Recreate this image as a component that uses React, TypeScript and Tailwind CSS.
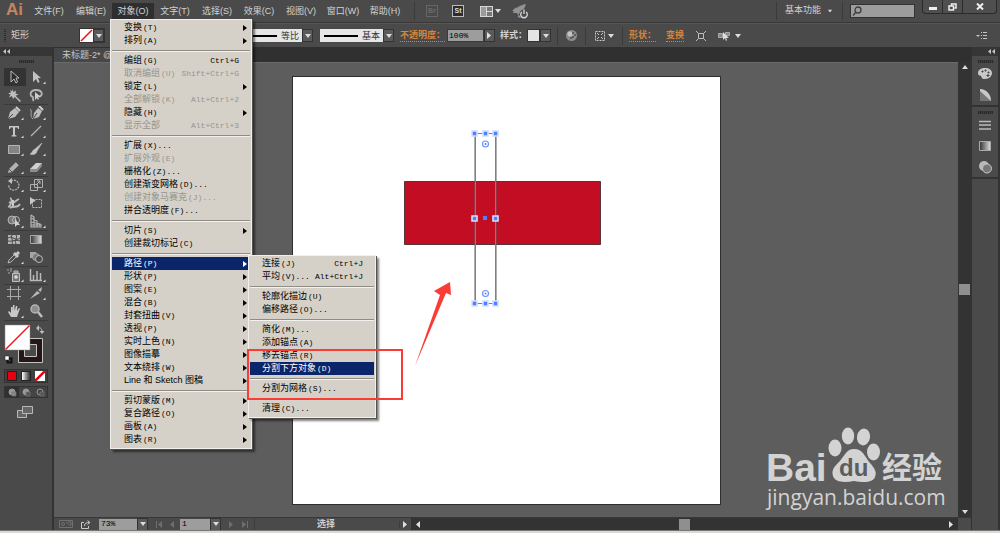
import { clsx } from 'clsx'
import type { ReactNode } from 'react'

type Item = {
  label: string
  keys?: string
  shortcut?: string
  disabled?: boolean
  sub?: boolean
  active?: boolean
}

const menuNames = ['文件(F)', '编辑(E)', '对象(O)', '文字(T)', '选择(S)', '效果(C)', '视图(V)', '窗口(W)', '帮助(H)']

const objectMenu: Item[][] = [
  [
    { label: '变换', keys: '(T)', sub: true },
    { label: '排列', keys: '(A)', sub: true },
  ],
  [
    { label: '编组', keys: '(G)', shortcut: 'Ctrl+G' },
    { label: '取消编组', keys: '(U)', shortcut: 'Shift+Ctrl+G', disabled: true },
    { label: '锁定', keys: '(L)', sub: true },
    { label: '全部解锁', keys: '(K)', shortcut: 'Alt+Ctrl+2', disabled: true },
    { label: '隐藏', keys: '(H)', sub: true },
    { label: '显示全部', shortcut: 'Alt+Ctrl+3', disabled: true },
  ],
  [
    { label: '扩展', keys: '(X)...' },
    { label: '扩展外观', keys: '(E)', disabled: true },
    { label: '栅格化', keys: '(Z)...' },
    { label: '创建渐变网格', keys: '(D)...' },
    { label: '创建对象马赛克', keys: '(J)...', disabled: true },
    { label: '拼合透明度', keys: '(F)...' },
  ],
  [
    { label: '切片', keys: '(S)', sub: true },
    { label: '创建裁切标记', keys: '(C)' },
  ],
  [
    { label: '路径', keys: '(P)', sub: true, active: true },
    { label: '形状', keys: '(P)', sub: true },
    { label: '图案', keys: '(E)', sub: true },
    { label: '混合', keys: '(B)', sub: true },
    { label: '封套扭曲', keys: '(V)', sub: true },
    { label: '透视', keys: '(P)', sub: true },
    { label: '实时上色', keys: '(N)', sub: true },
    { label: '图像描摹', sub: true },
    { label: '文本绕排', keys: '(W)', sub: true },
    { label: 'Line 和 Sketch 图稿', sub: true },
  ],
  [
    { label: '剪切蒙版', keys: '(M)', sub: true },
    { label: '复合路径', keys: '(O)', sub: true },
    { label: '画板', keys: '(A)', sub: true },
    { label: '图表', keys: '(R)', sub: true },
  ],
]

const pathMenu: Item[][] = [
  [
    { label: '连接', keys: '(J)', shortcut: 'Ctrl+J' },
    { label: '平均', keys: '(V)...', shortcut: 'Alt+Ctrl+J' },
  ],
  [
    { label: '轮廓化描边', keys: '(U)' },
    { label: '偏移路径', keys: '(O)...' },
  ],
  [
    { label: '简化', keys: '(M)...' },
    { label: '添加锚点', keys: '(A)' },
    { label: '移去锚点', keys: '(R)' },
    { label: '分割下方对象', keys: '(D)', active: true },
  ],
  [{ label: '分割为网格', keys: '(S)...' }],
  [{ label: '清理', keys: '(C)...' }],
]

function Menu({ groups, className, children }: { groups: Item[][]; className: string; children?: ReactNode }) {
  return (
    <div
      role="menu"
      className={clsx(
        'absolute border border-[#f1efe9] bg-[#d5d1c8] pt-px pb-[2px] text-[9px] leading-[13px] text-black shadow-[1px_1px_0_#55534f,3px_3px_2px_rgba(0,0,0,0.5)]',
        className,
      )}
    >
      {groups.map((group, g) => (
        <div key={g}>
          {g > 0 && (
            <div className="flex h-[7px] items-center px-px">
              <hr className="h-[2px] w-full border-0 border-t border-b border-t-[#8f8c86] border-b-[#f4f2ee]" />
            </div>
          )}
          {group.map((item) => (
            <div key={item.label} className="relative px-px">
              <button
                role="menuitem"
                disabled={item.disabled}
                className={clsx(
                  'flex h-[13px] w-full items-center pr-[3px] pl-3 whitespace-nowrap',
                  item.active && 'bg-[#0b256b] text-white',
                  item.disabled && 'text-[#97948e]',
                )}
              >
                <span>{item.label}</span>
                <span className="pl-px font-['Liberation_Mono',monospace] text-[8px]">{item.keys}</span>
                <span className="ml-auto pr-2 font-['Liberation_Mono',monospace] text-[8px]">{item.shortcut}</span>
                {item.sub && (
                  <svg width="4" height="6" viewBox="0 0 4 6" fill="currentColor">
                    <path d="M0 0l4 3-4 3z" />
                  </svg>
                )}
              </button>
              {item.active && children}
            </div>
          ))}
        </div>
      ))}
    </div>
  )
}

function Down({ className }: { className?: string }) {
  return (
    <svg width="6" height="4" viewBox="0 0 6 4" fill="#dcdcdc" className={className}>
      <path d="M0 0h6L3 4z" />
    </svg>
  )
}

function Arrow({ left, bar, dim }: { left?: boolean; bar?: boolean; dim?: boolean }) {
  return (
    <svg width="7" height="7" viewBox="0 0 7 7" fill={dim ? '#6e6e6e' : '#e2e2e2'} className={clsx(left && 'rotate-180')}>
      <path d="M1 0l4 3.5L1 7z" />
      {bar && <path d="M6 0h1v7H6z" />}
    </svg>
  )
}

function DropButton({ label, children }: { label: string; children?: ReactNode }) {
  return (
    <button aria-label={label} className="flex h-[13px] w-[11px] items-center justify-center border border-[#333] bg-[#5a5a5a]">
      {children ?? <Down />}
    </button>
  )
}

function Sep() {
  return <span className="h-[18px] w-px bg-[#3a3a3a]" />
}

function StrokeSelect({ label, value, line }: { label: string; value: string; line: string }) {
  return (
    <div className="flex h-[13px] items-center bg-[#e6e6e6] text-[#333]">
      <span className={clsx('mx-1 h-[2px] bg-black', line)} />
      <select aria-label={label} className="w-[21px] appearance-none bg-transparent text-[9px] leading-3">
        <option>{value}</option>
      </select>
      <DropButton label={`${label}选项`} />
    </div>
  )
}

function MenuBar() {
  return (
    <header className="relative z-20 flex h-[23px] items-start border-b border-[#383838] bg-[#4a4a4a] text-[#d2d2d2]">
      <span className="w-7 pl-[6px] font-['Liberation_Sans',sans-serif] text-[17px] leading-5 font-bold text-[#c48562]">Ai</span>
      <nav className="flex pt-[3px]">
        {menuNames.map((name) => (
          <div key={name} className="relative">
            <button className={clsx('block h-4 w-[42px] text-center text-[9px] leading-4 whitespace-nowrap', name === '对象(O)' && 'bg-[#2f2f2f]')}>
              {name}
            </button>
            {name === '对象(O)' && (
              <Menu groups={objectMenu} className="top-4 -left-[2px] w-[142px]">
                <Menu groups={pathMenu} className="-top-[2px] left-[137px] z-10 w-[128px]" />
                <div className="pointer-events-none absolute top-[92px] left-[136px] z-20 h-[51px] w-[156px] border-2 border-[#fb3c36]" />
              </Menu>
            )}
          </div>
        ))}
      </nav>
      <div className="flex h-[22px] items-center pl-2">
        <Sep />
        <button className="ml-[11px] h-3 w-3 border border-[#666] text-[7px] leading-[10px] font-bold text-[#6b6b6b]">Br</button>
        <button className="ml-[14px] h-3 w-3 border border-[#bbb] bg-[#2c2c2c] text-[7px] leading-[10px] font-bold text-[#ddd]">St</button>
        <button aria-label="排列文档" className="ml-4 flex items-center gap-[2px]">
          <svg width="13" height="11" viewBox="0 0 13 11">
            <path d="M0 0h13v11H0z" fill="#d6d6d6" />
            <path d="M1 1h5v9H1z" fill="#9b9b9b" />
            <path d="M7 1h5v4H7zM7 6h5v4H7z" fill="#777" />
          </svg>
          <Down />
        </button>
        <button aria-label="GPU 性能" className="ml-[11px]">
          <svg width="17" height="15" viewBox="0 0 17 15">
            <path d="M1 9C3 4 8 1 14 0c-1 4-4 8-8 11l-1-2z" fill="#929292" />
            <path d="M1 7l4-3M6 12l3 1" stroke="#929292" strokeWidth="2" />
            <circle cx="12" cy="10" r="4.5" fill="#4a4a4a" />
            <path d="M9.8 8a3.3 3.3 0 104.4 0M12 5.500v4.500" fill="none" stroke="#d8d8d8" strokeWidth="1.3" />
          </svg>
        </button>
      </div>
      <div className="ml-auto flex h-[22px] items-center">
        <Sep />
        <select aria-label="工作区" className="ml-2 w-[38px] appearance-none text-[9px]">
          <option>基本功能</option>
        </select>
        <Down className="mr-[9px] ml-1 scale-75" />
        <Sep />
        <label className="mx-[7px] flex h-[14px] w-[65px] items-center border border-[#333] bg-[#9d9d9d] pl-px">
          <svg width="10" height="10" viewBox="0 0 10 10" fill="none" stroke="#3c3c3c" strokeWidth="1.300">
            <circle cx="6" cy="4" r="3" />
            <path d="M4 6L1 9.500" />
          </svg>
          <input aria-label="搜索" className="w-0 flex-1 text-[9px] outline-none" />
        </label>
      </div>
      <div className="mr-[3px] flex h-[14px] w-[75px] divide-x divide-[#2b2b2b] rounded-b-sm border border-t-0 border-[#2b2b2b] bg-[#4f4f4f]">
        <button aria-label="最小化" className="flex w-5 items-center justify-center">
          <svg width="8" height="8"><path d="M0 4h8v3H0z" fill="#eee" /></svg>
        </button>
        <button aria-label="还原" className="flex w-5 items-center justify-center">
          <svg width="9" height="8" viewBox="0 0 9 8" fill="none" stroke="#eee" strokeWidth="1.500">
            <path d="M3.500 2.500V1H8v4H6.500M1 3h4.500v4H1z" />
          </svg>
        </button>
        <button aria-label="关闭" className="flex flex-1 items-center justify-center">
          <svg width="8" height="7" viewBox="0 0 8 7" stroke="#eee" strokeWidth="2"><path d="M1 0.500l6 6M7 0.500l-6 6" /></svg>
        </button>
      </div>
    </header>
  )
}

function ControlBar() {
  const link = 'border-b border-dotted border-[#d08136] text-[9px] leading-[11px] font-bold text-[#d8843a] whitespace-nowrap'
  return (
    <div className="flex h-6 items-center border-t border-[#575757] bg-[#4a4a4a] text-[9px] text-[#d2d2d2]">
      <span className="ml-1 h-[14px] w-[2px] bg-[repeating-linear-gradient(#2c2c2c_0_1px,transparent_1px_2px)]" />
      <span className="ml-[5px]">矩形</span>
      <div className="ml-[50px] flex items-center border border-[#333]">
        <button aria-label="填色">
          <svg width="13" height="13" viewBox="0 0 13 13"><path d="M0 0h13v13H0z" fill="#fff" /><path d="M1 12L12 1" stroke="#e21b1b" strokeWidth="1.600" /></svg>
        </button>
        <DropButton label="填色选项" />
      </div>
      <div className="ml-[130px]">
        <StrokeSelect label="变量宽度" value="等比" line="w-[38px]" />
      </div>
      <div className="ml-[7px]">
        <StrokeSelect label="画笔定义" value="基本" line="w-[34px]" />
      </div>
      <a href="#opacity" className={clsx('ml-[6px]', link)}>不透明度：</a>
      <input aria-label="不透明度" defaultValue="100%" className="ml-[2px] h-[13px] w-[37px] border border-[#3a3a3a] bg-[#9d9d9d] pl-px font-['Liberation_Mono',monospace] text-[8px] text-black outline-none" />
      <DropButton label="不透明度选项"><Arrow /></DropButton>
      <span className="ml-[5px] font-bold whitespace-nowrap">样式：</span>
      <div className="flex items-center">
        <button aria-label="图形样式" className="h-[13px] w-[13px] border border-[#333] bg-[#e3e3e3]" />
        <DropButton label="图形样式选项" />
      </div>
      <div className="ml-[6px] flex items-center">
        <Sep />
        <button aria-label="重新着色图稿" className="mx-2">
          <svg width="11" height="11" viewBox="0 0 11 11">
            <circle cx="5.500" cy="5.500" r="5.500" fill="#8d8d8d" />
            <circle cx="4" cy="4" r="2.500" fill="#c4c4c4" />
            <path d="M6 2h2v2H6zM8 4h2v2H8zM6 6h2v2H6zM4 7h2v2H4z" fill="#5c5c5c" />
          </svg>
        </button>
        <Sep />
        <button aria-label="对齐" className="mr-2 ml-[9px] flex items-center gap-[3px]">
          <svg width="10" height="10" viewBox="0 0 10 10" fill="none" stroke="#c6c6c6">
            <path d="M.5.5h9v9h-9z" strokeDasharray="2 1" />
            <path d="M2 2l2 2M8 2L6 4M2 8l2-2M8 8L6 6" />
          </svg>
          <Down />
        </button>
        <Sep />
      </div>
      <a href="#shape" className={clsx('ml-[6px]', link)}>形状：</a>
      <div className="ml-[5px]"><Sep /></div>
      <a href="#transform" className={clsx('ml-[5px]', link)}>变换</a>
      <div className="ml-[3px]"><Sep /></div>
      <button aria-label="隔离" className="ml-[9px]">
        <svg width="10" height="10" viewBox="0 0 10 10" fill="none" stroke="#bdbdbd">
          <path d="M2.500 2.500h5v5h-5z" />
          <path d="M0 0l2.500 2.500M10 0L7.500 2.500M0 10l2.500-2.500M10 10L7.500 7.500" />
        </svg>
      </button>
      <button aria-label="选择类似对象" className="ml-3 flex items-center gap-[5px]">
        <svg width="12" height="10" viewBox="0 0 12 10">
          <path d="M.5 2.500h4v4h-4zM7.500 1.500h4v3h-4z" fill="#888" stroke="#aaa" />
          <path d="M5 1v8l2-2 1 3 1-1-1-2h3z" fill="#ddd" />
        </svg>
        <Down />
      </button>
      <button aria-label="面板菜单" className="mr-[13px] ml-auto">
        <svg width="11" height="8" viewBox="0 0 11 8" fill="#c4c4c4"><path d="M0 3h4L2 5zM5 0h1v1H5zM5 3h1v1H5zM5 6h1v1H5zM7 0h4v1H7zM7 3h4v1H7zM7 6h4v1H7z" /></svg>
      </button>
    </div>
  )
}

const toolGroups: { name: string; icon: ReactNode; more?: boolean }[][] = [
  [
    { name: '选择工具', icon: <path d="M4 1v11l3-3 2 4 1.500-1L9 8h3z" fill="#2c2c2c" stroke="#b9b9b9" /> },
    { name: '直接选择工具', more: true, icon: <path d="M4 1v11l3-3 2 4 1.500-1L9 8h3z" fill="#c2c2c2" /> },
    { name: '魔棒工具', icon: <path d="M5 1l1.500 3L9 2.500 8.500 5.500l3 1-3 1.200L14 13l-1.200 1-5-5L6 11 5 8 2 9.500 3.500 6.500 1 5.500l3-1L3 2l2 1.500z" fill="#bdbdbd" /> },
    { name: '套索工具', icon: <><path d="M4 9C0 8 1 2 7 2s8 5 3 7M4 8c-1 2 1 3 0 5" fill="none" stroke="#b5b5b5" strokeWidth="1.800" /><path d="M6 4v8l2-2 1 2 1-1-1-2h3z" fill="#ccc" /></> },
  ],
  [
    { name: '钢笔工具', more: true, icon: <><path d="M1 13L3 6l5-4 4 4-4 5z" fill="#bdbdbd" /><path d="M9 0l5 5M1 13l5-5" stroke="#4a4a4a" /><path d="M9 1l4 4" stroke="#d0d0d0" strokeWidth="2" /></> },
    { name: '曲率工具', more: true, icon: <><path d="M4 13l1-6 4-5 4 3-3 6z" fill="#bdbdbd" /><path d="M4 13l4-6" stroke="#4a4a4a" /><path d="M1 3c3 2-1 7 3 10" fill="none" stroke="#aaa" /><path d="M10 0l4 4" stroke="#d0d0d0" strokeWidth="2" /></> },
    { name: '文字工具', more: true, icon: <path d="M2 2h10v3h-1l-.5-1.500H8V11l1.500.5v1h-5v-1L6 11V3.500H3.500L3 5H2z" fill="#c6c6c6" /> },
    { name: '直线段工具', more: true, icon: <path d="M2 12L12 2" stroke="#b5b5b5" strokeWidth="1.200" /> },
    { name: '矩形工具', more: true, icon: <path d="M1.500 3.500h11v8h-11z" fill="#848484" stroke="#b5b5b5" /> },
    { name: '画笔工具', more: true, icon: <path d="M13 1L8 9 6 7zM6 7l2 2c-1 4-4 4-7 3 2 0 2-4 5-5z" fill="#c2c2c2" stroke="#c2c2c2" strokeWidth=".6" /> },
    { name: '铅笔工具', more: true, icon: <><path d="M1 13l1-4 7-7 3 3-7 7z" fill="#b2b2b2" /><path d="M9 2l3 3M2 9l3 3" stroke="#555" /></> },
    { name: '橡皮擦工具', more: true, icon: <><path d="M1 9l6-6h6l-5 6z" fill="#d0d0d0" /><path d="M1 9h7v3H1zM8 9l5-6v3l-5 6z" fill="#8d8d8d" /></> },
  ],
  [
    { name: '旋转工具', more: true, icon: <><path d="M4 3c5-3 10 3 7 7s-10 2-9-3" fill="none" stroke="#b5b5b5" strokeWidth="1.300" strokeDasharray="2 1" /><path d="M5 0L1 3l4 3z" fill="#c2c2c2" /></> },
    { name: '比例缩放工具', more: true, icon: <path d="M5.500 1.500h8v8h-8zM1.500 6.500h7v6h-7zM7 7l4-4M8 3h3v3" fill="none" stroke="#b0b0b0" /> },
    { name: '宽度工具', more: true, icon: <><path d="M1 11c3-1 5-8 2-9M3 12c4-3 7 1 10-4M2 6c4 3 6-1 10-3" fill="none" stroke="#b9b9b9" strokeWidth="1.800" /><path d="M5 4h2v6H5z" fill="#c8c8c8" /></> },
    { name: '自由变换工具', icon: <><path d="M3.500 3.500h9v8h-9z" fill="none" stroke="#b9b9b9" strokeDasharray="2 1" /><path d="M1 1v8l3-3 3-1z" fill="#c8c8c8" /></> },
    { name: '形状生成器工具', more: true, icon: <><circle cx="5" cy="6" r="4" fill="#777" stroke="#b5b5b5" /><circle cx="9" cy="6" r="3.500" fill="none" stroke="#b5b5b5" /><path d="M8 5v8l2-2h3z" fill="#d0d0d0" /></> },
    { name: '透视网格工具', more: true, icon: <path d="M2 1v12h11M2 1l3 2v10M2 4l6 3v6M2 8l9 2v3M2 11h11" fill="none" stroke="#b5b5b5" strokeWidth="1.200" /> },
  ],
  [
    { name: '网格工具', icon: <><path d="M1 3h12v9H1z" fill="#b5b5b5" /><path d="M1 6c4-3 8 4 12 0M1 9c4 1 8-2 12 0M5 3c-2 3 2 5 0 9M9 3c2 3-2 5 0 9" fill="none" stroke="#454545" /></> },
    { name: '渐变工具', icon: <><defs><linearGradient id="tool-grad"><stop stopColor="#333" /><stop offset="1" stopColor="#ddd" /></linearGradient></defs><path d="M1.500 3.500h11v8h-11z" fill="url(#tool-grad)" stroke="#a8a8a8" /></> },
    { name: '吸管工具', more: true, icon: <><path d="M1 13l1-3 6-6 2 2-6 6z" fill="none" stroke="#b5b5b5" /><path d="M7 3l4 4M9 5l3-3" stroke="#c8c8c8" strokeWidth="3" /></> },
    { name: '混合工具', icon: <><path d="M1 2h6v6H1z" fill="#a5a5a5" /><circle cx="7" cy="7" r="3.500" fill="#777" stroke="#aaa" /><circle cx="10" cy="9" r="3.500" fill="#4a4a4a" stroke="#b9b9b9" /></> },
  ],
  [
    { name: '符号喷枪工具', more: true, icon: <><path d="M5.500 5.500h7v8h-7zM7 3h4v2H7z" fill="#777" stroke="#bdbdbd" /><circle cx="9" cy="9" r="1.800" fill="#ddd" /><path d="M0 2h2M3 3h2M1 5h2M3 1h2" stroke="#aaa" /></> },
    { name: '柱形图工具', more: true, icon: <path d="M1.500 1v11.500H13M4.500 12V7M8 12V3M11.500 12V5" fill="none" stroke="#b9b9b9" strokeWidth="1.500" /> },
  ],
  [
    { name: '画板工具', icon: <path d="M3.500 0v14M11.500 0v14M0 3.500h14M0 10.500h14" stroke="#a9a9a9" fill="none" /> },
    { name: '切片工具', more: true, icon: <path d="M1 13L8 5l3 2zM9 4l4-3-1 5z" fill="#b9b9b9" /> },
    { name: '抓手工具', more: true, icon: <path d="M4 13L1 8l1-1 2 2V3h1.500v4L6 1h1.500v6L9 2h1.300L10 7l2-3 1 .5L11 10l-1 3z" fill="#c8c8c8" /> },
    { name: '缩放工具', icon: <><circle cx="6" cy="5" r="4" fill="#8d8d8d" stroke="#b5b5b5" strokeWidth="1.500" /><path d="M9 8l4 5" stroke="#bdbdbd" strokeWidth="2.500" /></> },
  ],
]

function Grip() {
  return <span className="mx-auto mt-1 block h-[3px] w-[15px] bg-[repeating-linear-gradient(90deg,#2a2a2a_0_1px,#3d3d3d_1px_2px)]" />
}

function Collapse({ className }: { className: string }) {
  return (
    <div className={clsx('flex h-[9px] items-center bg-[#363636] px-[3px]', className)}>
      <svg width="7" height="5" viewBox="0 0 7 5" fill="#c4c4c4"><path d="M3 0v5L0 2.500zM7 0v5L4 2.500z" /></svg>
    </div>
  )
}

function Toolbox() {
  return (
    <aside className="flex w-[54px] shrink-0 flex-col border-r-2 border-[#333] bg-[#4a4a4a]">
      <Collapse className="justify-start" />
      <Grip />
      <div className="mt-[5px] flex flex-col px-1">
        {toolGroups.map((tools, g) => (
          <div key={g} className="grid w-11 grid-cols-2 shadow-[0_1px_#3a3a3a]">
            {tools.map((tool) => (
              <button
                key={tool.name}
                aria-label={tool.name}
                className={clsx('flex h-[18px] items-center justify-center', tool.name === '选择工具' && 'bg-[#333]')}
              >
                <svg width="18" height="15" viewBox="-1 0 18 15">
                  {tool.icon}
                  {tool.more && <path d="M16.500 11.500V14h-2.500z" fill="#ddd" />}
                </svg>
              </button>
            ))}
          </div>
        ))}
      </div>
      <button aria-label="填色和描边" className="mt-1 ml-1">
        <svg width="44" height="42" viewBox="0 0 44 42">
          <path d="M14.500 14.500h24v24h-24z" fill="#231815" stroke="#c4c4c4" />
          <path d="M20.500 20.500h12v12h-12z" fill="#4a4a4a" stroke="#c4c4c4" />
          <path d="M1 1h25v25H1z" fill="#fff" stroke="#888" strokeWidth=".5" />
          <path d="M1.500 25.500L25.500 1.500" stroke="#e8191c" strokeWidth="1.500" />
          <path d="M33 4c4-1 5 1 5 4" fill="none" stroke="#bdbdbd" />
          <path d="M35 1v6l-3-3zM35.500 7h5l-2.500 3z" fill="#bdbdbd" />
          <path d="M3.500 34.500h4v4h-4z" fill="none" stroke="#111" strokeWidth="2" />
          <path d="M1 32h4v4H1z" fill="#fff" stroke="#222" strokeWidth=".5" />
        </svg>
      </button>
      <div className="mx-1 mt-[3px] flex h-[14px] items-center justify-around border border-[#333] bg-[#404040]">
        <button aria-label="颜色" className="h-[10px] w-[10px] border border-[#222] bg-[#e60012]" />
        <button aria-label="渐变" className="h-[10px] w-[10px] border border-[#222] bg-linear-to-r from-white to-[#333]" />
        <button aria-label="无">
          <svg width="10" height="10" className="block"><path d="M0 0h10v10H0z" fill="#fff" /><path d="M0 10L10 0" stroke="#e60012" strokeWidth="2.500" /></svg>
        </button>
      </div>
      <div className="mx-1 mt-[3px] flex h-3 items-center justify-around border border-[#333] bg-[#444]">
        {['正常绘图', '背面绘图', '内部绘图'].map((mode, i) => (
          <button key={mode} aria-label={mode} className={clsx('flex h-full flex-1 items-center justify-center', i === 0 && 'bg-[#303030]')}>
            <svg width="9" height="9" viewBox="0 0 9 9">
              <circle cx="4" cy="4" r="3" fill={i === 2 ? 'none' : '#999'} stroke="#999" />
              <path d="M4 4h4v4H4z" fill={i === 0 ? '#888' : '#555'} stroke="#777" strokeWidth=".7" />
            </svg>
          </button>
        ))}
      </div>
      <button aria-label="更改屏幕模式" className="mt-2 ml-[17px]">
        <svg width="17" height="12" viewBox="0 0 17 12" fill="#666" stroke="#b9b9b9">
          <path d="M.5 4.500h9v7h-9z" />
          <path d="M5.500.5h10v7h-10z" />
        </svg>
      </button>
    </aside>
  )
}

const panels: { name: string; icon: ReactNode }[][] = [
  [
    { name: '颜色', icon: <><path d="M7 1c4 0 7 2 7 5s-3 6-7 6-3-2-4-3-3 0-3-3 3-5 7-5z" fill="#c8c8c8" /><path d="M4 4h1v1H4zM7 3h1v1H7zM10 5h1v1h-1zM9 8h2v1H9z" fill="#444" stroke="#444" /></> },
    { name: '颜色参考', icon: <><path d="M2 1c6 0 11 5 11 12H2z" fill="#777" /><path d="M2 1c6 0 11 5 11 12L2 3z" fill="#c8c8c8" /></> },
  ],
  [
    { name: '描边', icon: <path d="M1 3.500h12M1 7h12M1 11h12" stroke="#b9b9b9" strokeWidth="1.500" /> },
    { name: '渐变面板', icon: <path d="M1.500 2.500h11v9h-11z" fill="url(#tool-grad)" stroke="#aaa" /> },
    { name: '透明度', icon: <><circle cx="6" cy="6" r="5" fill="#b9b9b9" /><circle cx="9" cy="8.500" r="4.500" fill="#777" stroke="#c8c8c8" /></> },
  ],
]

function PanelDock() {
  return (
    <aside className="flex w-[29px] shrink-0 flex-col border-r-2 border-l border-[#333] bg-[#4a4a4a]">
      <Collapse className="justify-end" />
      {panels.map((group, g) => (
        <div key={g} className="border-b-2 border-[#333]">
          <Grip />
          <div className="flex flex-col">
            {group.map((panel) => (
              <button key={panel.name} aria-label={panel.name} className="flex h-[21px] items-center justify-center">
                <svg width="14" height="14" viewBox="0 0 14 14">{panel.icon}</svg>
              </button>
            ))}
          </div>
        </div>
      ))}
    </aside>
  )
}

const handles = [
  [181, 56], [192, 56], [202, 56],
  [181, 141], [202, 141],
  [181, 226], [192, 226], [202, 226],
]

function Artboard() {
  return (
    <svg width="427" height="427" viewBox="0 0 427 427" className="bg-white outline outline-[#2e2e2e]">
      <path d="M111.500 104.500h196v63h-196z" fill="#c30d23" stroke="#59333a" />
      <path d="M182 56v170M203 56v170" stroke="#636363" />
      <path d="M182 56.500h21M182 226.500h21M182.500 56v170M202.500 56v170" fill="none" stroke="#5b7ee8" />
      {handles.map(([x, y]) => (
        <path key={`${x}-${y}`} d={`M${x - 2} ${y - 2}h5v5h-5z`} fill="#4f80ff" stroke="#d5e0ff" strokeWidth="1.600" />
      ))}
      <path d="M190 139h4v4h-4z" fill="#4f80ff" />
      {[67, 216.5].map((y) => (
        <g key={y}>
          <circle cx="192.500" cy={y} r="3" fill="#fff" stroke="#6c93f5" strokeWidth="1.200" />
          <circle cx="192.500" cy={y} r="1" fill="#4f80ff" />
        </g>
      ))}
      <path d="M122 289l25-71-6-4L157 205l1 13-5-2z" fill="#fb3c36" />
    </svg>
  )
}

function Watermark() {
  return (
    <svg width="184" height="90" viewBox="0 0 184 90" fill="#d3d3d3" className="absolute right-[10px] bottom-[1px]">
      <text x="2" y="55" className="font-['Liberation_Sans',sans-serif] text-[39px] font-bold">Bai</text>
      <ellipse cx="71" cy="22" rx="6.500" ry="8.500" />
      <ellipse cx="84" cy="10" rx="6.200" ry="8.500" />
      <ellipse cx="99.500" cy="11" rx="6.500" ry="8.500" transform="rotate(10 99.500 11)" />
      <ellipse cx="109.500" cy="26" rx="6.500" ry="8.500" />
      <path d="M90 23c9 0 11 8 16 14s7 9 5 14-9 6-21 4c-11 2-19 1-21-5s2-10 6-14c5-5 7-13 15-13z" />
      <text x="75" y="50" fill="#5d5d5d" className="font-['Liberation_Sans',sans-serif] text-[24px] font-bold">du</text>
      <text x="118" y="52" className="font-['Noto_Sans_CJK_SC',sans-serif] text-[30px] font-bold">经验</text>
      <text x="3" y="79" className="font-['Open_Sans',sans-serif] text-[21px]">jingyan.baidu.com</text>
    </svg>
  )
}

function StatusBar() {
  const field = "h-[11px] bg-[#9d9d9d] pl-[2px] font-['Liberation_Mono',monospace] text-[8px] text-black outline-none"
  return (
    <footer className="flex h-[13px] shrink-0 items-center border-t border-[#383838] bg-[#4a4a4a]">
      <svg width="14" height="8" viewBox="0 0 14 8" fill="none" stroke="#707070" className="ml-[5px]">
        <path d="M.5.5h13v7H.5z" />
        <circle cx="4" cy="4" r="1.500" />
        <path d="M7 2l5 4M9 2h3v3" />
      </svg>
      <svg width="10" height="9" viewBox="0 0 10 9" fill="none" stroke="#c8c8c8" className="ml-2">
        <path d="M3 2.500H.5v6h7V6M3.500 6c0-3 2-3.500 5-3.500M6.500.5l2.500 2-2.500 2" />
      </svg>
      <input aria-label="缩放" defaultValue="73%" className={clsx('ml-2 w-[38px]', field)} />
      <DropButton label="缩放选项" />
      <div className="ml-2 flex items-center gap-[5px]">
        <Arrow left bar dim />
        <Arrow left dim />
      </div>
      <input aria-label="画板编号" defaultValue="1" className={clsx('ml-[5px] w-[30px]', field)} />
      <DropButton label="画板选项" />
      <div className="ml-[7px] flex items-center gap-[6px]">
        <Arrow dim />
        <Arrow bar dim />
      </div>
      <div className="ml-[6px] w-[145px] border-l border-[#3d3d3d] pl-[62px] text-[9px] leading-3 font-bold text-[#cfcfcf]">选择</div>
      <div className="flex w-3 justify-center border-l border-[#3d3d3d]"><Arrow /></div>
      <div className="flex h-full flex-1 items-center justify-between bg-[#333] px-[3px]">
        <Arrow left />
        <span className="h-[11px] w-[11px] bg-[#8f8f8f]" />
        <Arrow />
      </div>
      <span className="w-[13px]" />
    </footer>
  )
}

export default function App() {
  return (
    <div className="flex h-screen flex-col overflow-hidden bg-[#4a4a4a] font-['Liberation_Sans','Noto_Sans_CJK_SC',sans-serif] leading-normal">
      <MenuBar />
      <ControlBar />
      <div className="flex min-h-0 flex-1">
        <Toolbox />
        <div className="flex min-w-0 flex-1 flex-col">
          <div className="flex h-[15px] shrink-0 bg-[#303030]">
            <button className="mt-px w-[130px] bg-[#474747] pl-2 text-left text-[9px] leading-3 whitespace-nowrap text-[#c8c8c8]">
              未标题-2* @
            </button>
          </div>
          <div className="flex min-h-0 flex-1">
            <main className="relative grid min-w-0 flex-1 place-items-center border-t border-[#6a6a6a] bg-[#5d5d5d] pt-px pl-px">
              <Artboard />
              <Watermark />
            </main>
            <div className="flex w-[13px] shrink-0 flex-col items-center justify-between bg-[#333] py-[3px]">
              <Down className="rotate-180" />
              <span className="h-[11px] w-[11px] bg-[#8f8f8f]" />
              <Down />
            </div>
          </div>
          <StatusBar />
        </div>
        <PanelDock />
      </div>
      <div className="h-[3px] shrink-0 border-t border-[#777] bg-[#dcdad2]" />
    </div>
  )
}
